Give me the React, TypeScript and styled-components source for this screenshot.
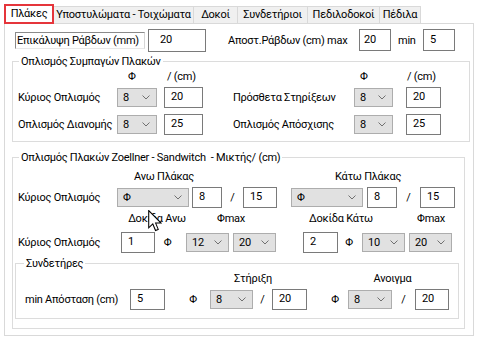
import React from "react";
import styled, { createGlobalStyle } from "styled-components";

const GlobalStyle = createGlobalStyle`
  html, body { margin: 0; padding: 0; background: #ffffff; }
  body {
    font-family: Roboto, "Noto Sans", sans-serif;
    font-size: 11px;
    letter-spacing: -0.25px;
    color: #000;
  }
  * { box-sizing: border-box; }
`;

const Window = styled.div`
  position: relative;
  width: 481px;
  height: 337px;
  overflow: hidden;
  background: #fff;
`;

const TabBar = styled.div`
  display: flex;
  align-items: flex-end;
  height: 23px;
  padding-left: 4px;
`;

const Tab = styled.div<{ $w: number; $active?: boolean }>`
  position: relative;
  z-index: ${(p) => (p.$active ? 2 : 0)};
  width: ${(p) => p.$w}px;
  height: ${(p) => (p.$active ? 20 : 17)}px;
  margin-bottom: ${(p) => (p.$active ? -1 : 0)}px;
  display: flex;
  align-items: center;
  justify-content: center;
  white-space: nowrap;
  background: ${(p) => (p.$active ? "#fff" : "#f0f0f0")};
  border: ${(p) => (p.$active ? "2px solid #e5353b" : "1px solid #d9d9d9")};
  border-left: ${(p) => (p.$active ? "2px solid #e5353b" : "none")};
  border-bottom: ${(p) => (p.$active ? "2px solid #e5353b" : "none")};
  padding-bottom: 1px;
`;

const Panel = styled.div`
  margin-left: 4px;
  width: 470px;
  height: 313px;
  border: 1px solid #d9d9d9;
  background: #fff;
  padding: 4px 0 0 7px;
`;

const Row = styled.div<{ $h?: number; $mt?: number }>`
  display: flex;
  align-items: center;
  height: ${(p) => p.$h ?? 21}px;
  margin-top: ${(p) => p.$mt ?? 0}px;
  white-space: nowrap;
`;

const Cell = styled.div<{ $w: number; $ml?: number; $center?: boolean; $pl?: number }>`
  flex: none;
  width: ${(p) => p.$w}px;
  margin-left: ${(p) => p.$ml ?? 0}px;
  padding-left: ${(p) => p.$pl ?? 0}px;
  text-align: ${(p) => (p.$center ? "center" : "left")};
  line-height: 15px;
  white-space: nowrap;
  overflow: visible;
`;

const StaticLabel = styled.div<{ $w: number; $ml?: number }>`
  flex: none;
  width: ${(p) => p.$w}px;
  height: 17px;
  margin-left: ${(p) => p.$ml ?? 0}px;
  border-style: solid;
  border-width: 1px;
  border-color: #8a8a8a #d6d6d6 #e8e8e8 #8a8a8a;
  padding-left: 1px;
  line-height: 15px;
  white-space: nowrap;
  overflow: hidden;
`;

const Field = styled.div<{ $w: number; $ml?: number; $h?: number; $pl?: number }>`
  flex: none;
  width: ${(p) => p.$w}px;
  height: ${(p) => p.$h ?? 21}px;
  margin-left: ${(p) => p.$ml ?? 0}px;
  border: 1px solid #7a7a7a;
  background: #fff;
  padding: 0 0 2px ${(p) => p.$pl ?? 6}px;
  display: flex;
  align-items: center;
`;

const SelectBox = styled.div<{ $w: number; $ml?: number }>`
  flex: none;
  width: ${(p) => p.$w}px;
  height: 19px;
  margin-left: ${(p) => p.$ml ?? 0}px;
  border: 1px solid #adadad;
  background: #e1e1e1;
  display: flex;
  align-items: center;
  justify-content: space-between;
  padding: 0 6px 1px 5px;
`;

const Chevron = styled.svg`
  width: 8px;
  height: 5px;
  flex: none;
`;

const Group = styled.fieldset<{ $w: number; $h: number; $mt?: number; $pl?: number }>`
  margin: ${(p) => p.$mt ?? 0}px 0 0 0;
  width: ${(p) => p.$w}px;
  height: ${(p) => p.$h}px;
  min-width: 0;
  border: 1px solid #dcdcdc;
  padding: 0 0 0 ${(p) => p.$pl ?? 5}px;
`;

const Legend = styled.legend<{ $ml?: number }>`
  padding: 0 2px;
  margin-left: ${(p) => p.$ml ?? 1}px;
  line-height: 15px;
  font-size: 11px;
`;

const Cursor = styled.svg`
  position: absolute;
  left: 148px;
  top: 210px;
  width: 14px;
  height: 22px;
`;

type SelProps = { w: number; ml?: number; v: string };
const Select: React.FC<SelProps> = ({ w, ml, v }) => (
  <SelectBox $w={w} $ml={ml}>
    <span>{v}</span>
    <Chevron viewBox="0 0 8 5">
      <polyline points="0.5,0.5 4,4 7.5,0.5" fill="none" stroke="#707070" strokeWidth="1" />
    </Chevron>
  </SelectBox>
);

const tabs = [
  { t: "Πλάκες", w: 50, active: true },
  { t: "Υποστυλώματα - Τοιχώματα", w: 140 },
  { t: "Δοκοί", w: 44 },
  { t: "Συνδετήριοι", w: 70 },
  { t: "Πεδιλοδοκοί", w: 72 },
  { t: "Πέδιλα", w: 41 },
];

export default function App() {
  return (
    <Window>
      <GlobalStyle />
      <TabBar>
        {tabs.map((t) => (
          <Tab key={t.t} $w={t.w} $active={t.active}>
            {t.t}
          </Tab>
        ))}
      </TabBar>
      <Panel>
        <Row $h={24}>
          <StaticLabel $w={130} $ml={3}>Επικάλυψη Ράβδων (mm)</StaticLabel>
          <Field $w={58} $h={23} $ml={3} $pl={11}>20</Field>
          <Cell $w={131} $ml={22}>Αποστ.Ράβδων (cm) max</Cell>
          <Field $w={32} $h={22} $pl={4}>20</Field>
          <Cell $w={25} $ml={7}>min</Cell>
          <Field $w={32} $h={22} $pl={6}>5</Field>
        </Row>

        <Group $w={458} $h={88} $mt={2}>
          <Legend>Οπλισμός Συμπαγών Πλακών</Legend>
          <Row $h={15}>
            <Cell $w={40} $ml={99} $pl={11}>Φ</Cell>
            <Cell $w={39} $ml={7} $pl={3}>/ (cm)</Cell>
            <Cell $w={39} $ml={151} $pl={6}>Φ</Cell>
            <Cell $w={35} $ml={13} $pl={1}>/ (cm)</Cell>
          </Row>
          <Row $mt={3}>
            <Cell $w={99}>Κύριος Οπλισμός</Cell>
            <Select w={40} v="8" />
            <Field $w={39} $ml={7}>20</Field>
            <Cell $w={121} $ml={30}>Πρόσθετα Στηρίξεων</Cell>
            <Select w={39} v="8" />
            <Field $w={35} $ml={13}>20</Field>
          </Row>
          <Row $mt={6}>
            <Cell $w={99}>Οπλισμός Διανομής</Cell>
            <Select w={40} v="8" />
            <Field $w={39} $ml={7}>25</Field>
            <Cell $w={121} $ml={30}>Οπλισμός Απόσχισης</Cell>
            <Select w={39} v="8" />
            <Field $w={35} $ml={13}>25</Field>
          </Row>
        </Group>

        <Group $w={453} $h={179} $mt={8} $pl={2}>
          <Legend $ml={4}>Οπλισμός Πλακών Zoellner - Sandwitch&nbsp; - Μικτής/ (cm)</Legend>
          <Row $h={15} $mt={4}>
            <Cell $w={94} $ml={102} $center>Ανω Πλάκας</Cell>
            <Cell $w={154} $ml={80} $center>Κάτω Πλάκας</Cell>
          </Row>
          <Row $mt={3}>
            <Cell $w={99} $ml={3}>Κύριος Οπλισμός</Cell>
            <Select w={72} v="Φ" />
            <Field $w={30} $ml={3}>8</Field>
            <Cell $w={21} $center>/</Cell>
            <Field $w={34}>15</Field>
            <Select w={72} ml={14} v="Φ" />
            <Field $w={30} $ml={4}>8</Field>
            <Cell $w={23} $center>/</Cell>
            <Field $w={35}>15</Field>
          </Row>
          <Row $h={15} $mt={3}>
            <Cell $w={80} $ml={102} $center>Δοκίδα Ανω</Cell>
            <Cell $w={40} $ml={14} $center>Φmax</Cell>
            <Cell $w={80} $ml={50} $center>Δοκίδα Κάτω</Cell>
            <Cell $w={40} $ml={30} $center>Φmax</Cell>
          </Row>
          <Row $mt={6}>
            <Cell $w={103} $ml={3}>Κύριος Οπλισμός</Cell>
            <Field $w={34}>1</Field>
            <Cell $w={25} $center>Φ</Cell>
            <Select w={43} ml={6} v="12" />
            <Select w={43} ml={4} v="20" />
            <Field $w={35} $ml={27}>2</Field>
            <Cell $w={22} $center>Φ</Cell>
            <Select w={43} ml={2} v="10" />
            <Select w={43} ml={4} v="20" />
          </Row>

          <Group $w={444} $h={63} $mt={3} $pl={7}>
            <Legend>Συνδετήρες</Legend>
            <Row $h={15}>
              <Cell $w={86} $ml={187} $center>Στήριξη</Cell>
              <Cell $w={89} $ml={52} $center>Ανοιγμα</Cell>
            </Row>
            <Row $mt={3}>
              <Cell $w={105} $ml={2}>min Απόσταση (cm)</Cell>
              <Field $w={35}>5</Field>
              <Cell $w={16} $ml={20} $center>Φ</Cell>
              <Select w={43} ml={9} v="8" />
              <Cell $w={19} $center>/</Cell>
              <Field $w={35}>20</Field>
              <Cell $w={16} $ml={20} $center>Φ</Cell>
              <Select w={44} ml={5} v="8" />
              <Cell $w={23} $center>/</Cell>
              <Field $w={34}>20</Field>
            </Row>
          </Group>
        </Group>
      </Panel>
      <Cursor viewBox="0 0 13 21">
        <path
          d="M0.5,0.5 L0.5,17 L4.4,13.3 L7,19.6 L9.6,18.5 L7.1,12.5 L12.3,12.5 Z"
          fill="#fff"
          stroke="#000"
          strokeWidth="1"
          strokeLinejoin="miter"
        />
      </Cursor>
    </Window>
  );
}
